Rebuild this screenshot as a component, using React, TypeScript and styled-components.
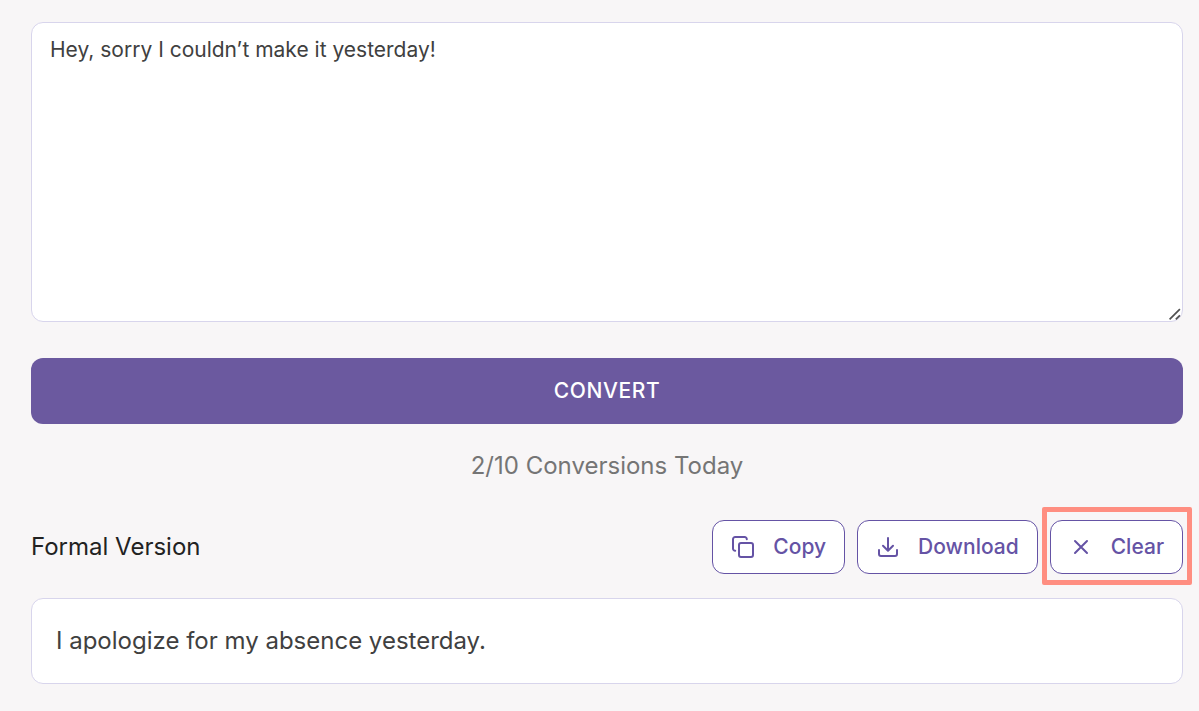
import React, { useState } from "react";
import styled, { createGlobalStyle } from "styled-components";

const Global = createGlobalStyle`
  *, *::before, *::after { box-sizing: border-box; }
  body {
    margin: 0;
    background: #f8f6f7;
    font-family: Inter, "Liberation Sans", sans-serif;
    color: #222;
  }
  button, textarea { font: inherit; }
`;

const Page = styled.main`
  display: flex;
  flex-direction: column;
  padding: 22px 16px 27px 31px;
`;

const Editor = styled.div`
  position: relative;
  display: flex;
`;

const SourceText = styled.textarea`
  flex: 1;
  height: 300px;
  padding: 11px 18px;
  border: 1px solid #d8d5ec;
  border-radius: 12px;
  outline: none;
  resize: none;
  background: #fff;
  color: #404040;
  font-size: 21px;
  line-height: 32px;
`;

const Grip = styled.svg`
  position: absolute;
  right: 2px;
  bottom: 1px;
  pointer-events: none;
`;

const ConvertButton = styled.button`
  height: 66px;
  margin-top: 36px;
  border: 0;
  border-radius: 12px;
  background: #6b599f;
  color: #fff;
  font-size: 21px;
  font-weight: 500;
  line-height: 36px;
  letter-spacing: 0.03em;
  text-transform: uppercase;
`;

const Usage = styled.p`
  margin: 24px 0 0;
  color: #757575;
  font-size: 24px;
  line-height: 36px;
  text-align: center;
`;

const ResultHeader = styled.div`
  display: flex;
  align-items: center;
  justify-content: space-between;
  margin-top: 36px;
`;

const ResultTitle = styled.h2`
  margin: 0;
  font-size: 24px;
  font-weight: 400;
  line-height: 36px;
`;

const Actions = styled.div`
  display: flex;
  gap: 12px;
`;

const ActionButton = styled.button<{ $highlighted?: boolean }>`
  position: relative;
  display: flex;
  align-items: center;
  gap: 18px;
  height: 54px;
  padding: 0 18px;
  border: 1px solid #6553a5;
  border-radius: 12px;
  background: #fff;
  color: #6553a5;
  font-size: 21px;
  font-weight: 500;
  line-height: 36px;

  &::after {
    content: "";
    display: ${(p) => (p.$highlighted ? "block" : "none")};
    position: absolute;
    inset: -14px -10px -12px -9px;
    border: 5px solid #ff8e81;
    border-radius: 2px;
    pointer-events: none;
  }
`;

const Icon = styled.svg`
  width: 24px;
  height: 24px;
  fill: none;
  stroke: currentColor;
  stroke-width: 2;
  stroke-linecap: round;
  stroke-linejoin: round;
`;

const Result = styled.output`
  display: block;
  margin-top: 24px;
  padding: 24px;
  border: 1px solid #d8d5ec;
  border-radius: 12px;
  background: #fff;
  color: #404040;
  font-size: 24px;
  line-height: 36px;
`;

export default function App() {
  const [text, setText] = useState("Hey, sorry I couldn’t make it yesterday!");
  const [result, setResult] = useState("I apologize for my absence yesterday.");

  return (
    <>
      <Global />
      <Page>
        <Editor>
          <SourceText
            aria-label="Text to convert"
            spellCheck={false}
            value={text}
            onChange={(e) => setText(e.target.value)}
          />
          <Grip width="13" height="13" viewBox="0 0 13 13" aria-hidden="true">
            <path d="M1.6 11.4 L11.9 1.2 M7.8 11.4 L11.9 7.4" stroke="#505050" strokeWidth="1.7" fill="none" />
          </Grip>
        </Editor>
        <ConvertButton type="button">Convert</ConvertButton>
        <Usage>2/10 Conversions Today</Usage>
        <ResultHeader>
          <ResultTitle>Formal Version</ResultTitle>
          <Actions>
            <ActionButton type="button">
              <Icon viewBox="0 0 24 24" aria-hidden="true">
                <rect x="8" y="8" width="14" height="14" rx="2" />
                <path d="M4.2 15.8A2.2 2.2 0 0 1 2 13.6V4.2A2.2 2.2 0 0 1 4.2 2H13.6A2.2 2.2 0 0 1 15.8 4.2" />
              </Icon>
              Copy
            </ActionButton>
            <ActionButton type="button">
              <Icon viewBox="0 0 24 24" aria-hidden="true">
                <path d="M12 3V15.6M7 10.8L12 15.8L17 10.8M3 15V19A2 2 0 0 0 5 21H19A2 2 0 0 0 21 19V15" />
              </Icon>
              Download
            </ActionButton>
            <ActionButton type="button" $highlighted onClick={() => setResult("")}>
              <Icon viewBox="0 0 24 24" aria-hidden="true">
                <path d="M6 6L18 18M18 6L6 18" />
              </Icon>
              Clear
            </ActionButton>
          </Actions>
        </ResultHeader>
        <Result>{result}</Result>
      </Page>
    </>
  );
}
